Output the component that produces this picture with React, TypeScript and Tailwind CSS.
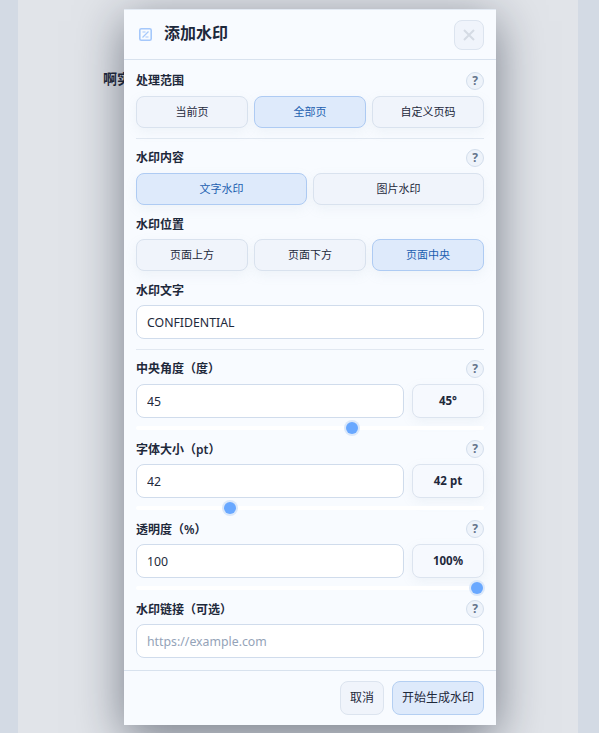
import React from 'react';

const Help = () => (
  <span className="w-[18px] h-[18px] rounded-full border border-[#d3deec] bg-[#eef3fa] flex items-center justify-center text-xs font-bold text-[#64748b] leading-none">?</span>
);

const Label: React.FC<{ text: string; help?: boolean; low?: boolean }> = ({ text, help, low }) => (
  <div className="flex items-center justify-between h-[18px]">
    <span className={low ? 'pt-0.5 text-xs font-semibold text-[#1e293b]' : 'text-xs font-semibold text-[#1e293b]'}>{text}</span>
    {help && <Help />}
  </div>
);

const Choice: React.FC<{ text: string; active?: boolean }> = ({ text, active }) => (
  <button
    className={
      active
        ? 'flex-1 h-8 rounded-lg border border-[#aecbf3] bg-[#deeafb] text-[11px] text-[#1d5fb0] shadow-[0_4px_12px_rgba(148,163,184,0.1)]'
        : 'flex-1 h-8 rounded-lg border border-[#d9e2ee] bg-[#f0f4fb] text-[11px] text-[#1e293b] shadow-[0_4px_12px_rgba(148,163,184,0.1)]'
    }
  >
    {text}
  </button>
);

const TextBox: React.FC<{ value?: string; placeholder?: string }> = ({ value, placeholder }) => (
  <input
    readOnly
    value={value}
    placeholder={placeholder}
    className="w-full h-[34px] rounded-lg border border-[#d0dcec] bg-white px-2.5 text-[12.3px] text-[#1e293b] placeholder:text-[#94a3b8] outline-none"
  />
);

const SliderRow: React.FC<{ value: string; badge: string; thumb: number }> = ({ value, badge, thumb }) => (
  <div>
    <div className="flex gap-2">
      <div className="flex-1">
        <TextBox value={value} />
      </div>
      <div className="w-[72px] h-[34px] rounded-lg border border-[#dce4ef] bg-[#f6f9fe] flex items-center justify-center text-[11.5px] font-bold text-[#1e293b] shadow-[0_4px_12px_rgba(148,163,184,0.1)]">
        {badge}
      </div>
    </div>
    <div className="relative h-1 mt-2 bg-white rounded-full">
      <div
        className="absolute top-1/2 -translate-x-1/2 -translate-y-1/2 w-3 h-3 rounded-full bg-[#69a8ff] shadow-[0_0_0_2px_#dbe8fa]"
        style={{ left: thumb }}
      />
    </div>
  </div>
);

export default function App() {
  return (
    <div
      className="relative h-[733px] overflow-hidden bg-[#d3dae4] px-[18px]"
      style={{ fontFamily: '"Noto Sans", "Noto Sans CJK SC", sans-serif' }}
    >
      {/* Page behind the dialog */}
      <div className="h-full w-[560px] bg-[#e1e4e9] pt-[66px] pl-[85px]">
        <span className="text-sm font-bold text-[#1e293b]">啊实</span>
      </div>

      {/* Dialog */}
      <div className="absolute left-[124px] top-[9px] w-[372px] h-[716px] bg-[#f8fbff] flex flex-col border-t border-[#e3eaf3] shadow-[0_12px_44px_rgba(15,23,42,0.5)]">
        <div className="h-[50px] shrink-0 border-b border-[#d8e2ee] flex items-center justify-between pl-[15px] pr-3">
          <div className="flex items-center gap-3">
            <svg width="13" height="13" viewBox="0 0 13 13" fill="none" stroke="#a5c8fb" strokeWidth="1.6">
              <rect x="0.8" y="0.8" width="11.4" height="11.4" rx="1.5" />
              <path d="M3.5 9.5 9.5 3.5M3.5 4h3M6.5 9h3" strokeWidth="1.2" />
            </svg>
            <span className="text-base font-semibold text-[#1e293b] -mt-1">添加水印</span>
          </div>
          <button className="w-[30px] h-[30px] rounded-lg border border-[#dce4ef] bg-[#f0f4fb] flex items-center justify-center">
            <svg width="14" height="14" viewBox="0 0 14 14" fill="none" stroke="#d5dbe4" strokeWidth="2">
              <path d="M2 2 12 12M12 2 2 12" />
            </svg>
          </button>
        </div>

        <div className="flex-1 px-3 pt-3">
          <Label text="处理范围" help />
          <div className="flex gap-1.5 mt-1.5">
            <Choice text="当前页" />
            <Choice text="全部页" active />
            <Choice text="自定义页码" />
          </div>
          <div className="h-px bg-[#e1e8f1] mt-2.5 mb-2.5" />

          <Label text="水印内容" help />
          <div className="flex gap-1.5 mt-1.5">
            <Choice text="文字水印" active />
            <Choice text="图片水印" />
          </div>

          <div className="mt-2.5">
            <Label text="水印位置" low />
          </div>
          <div className="flex gap-1.5 mt-1.5">
            <Choice text="页面上方" />
            <Choice text="页面下方" />
            <Choice text="页面中央" active />
          </div>

          <div className="mt-2.5">
            <Label text="水印文字" low />
          </div>
          <div className="mt-1.5">
            <TextBox value="CONFIDENTIAL" />
          </div>
          <div className="h-px bg-[#e1e8f1] mt-2.5 mb-2.5" />

          <Label text="中央角度（度）" help />
          <div className="mt-1.5">
            <SliderRow value="45" badge="45°" thumb={216} />
          </div>
          <div className="mt-2.5">
            <Label text="字体大小（pt）" help low />
          </div>
          <div className="mt-1.5">
            <SliderRow value="42" badge="42 pt" thumb={94} />
          </div>
          <div className="mt-2.5">
            <Label text="透明度（%）" help low />
          </div>
          <div className="mt-1.5">
            <SliderRow value="100" badge="100%" thumb={341} />
          </div>
          <div className="mt-2.5">
            <Label text="水印链接（可选）" help low />
          </div>
          <div className="mt-1.5">
            <TextBox placeholder="https://example.com" />
          </div>
        </div>

        <div className="h-[55px] shrink-0 border-t border-[#d8e2ee] flex items-center justify-end gap-2 px-3">
          <button className="h-[34px] w-[44px] rounded-lg border border-[#dce4ef] bg-[#f0f4fb] text-xs text-[#1e293b]">取消</button>
          <button className="h-[34px] w-[92px] rounded-lg border border-[#b4cff2] bg-[#deeafb] text-xs text-[#1e293b]">开始生成水印</button>
        </div>
      </div>
    </div>
  );
}
